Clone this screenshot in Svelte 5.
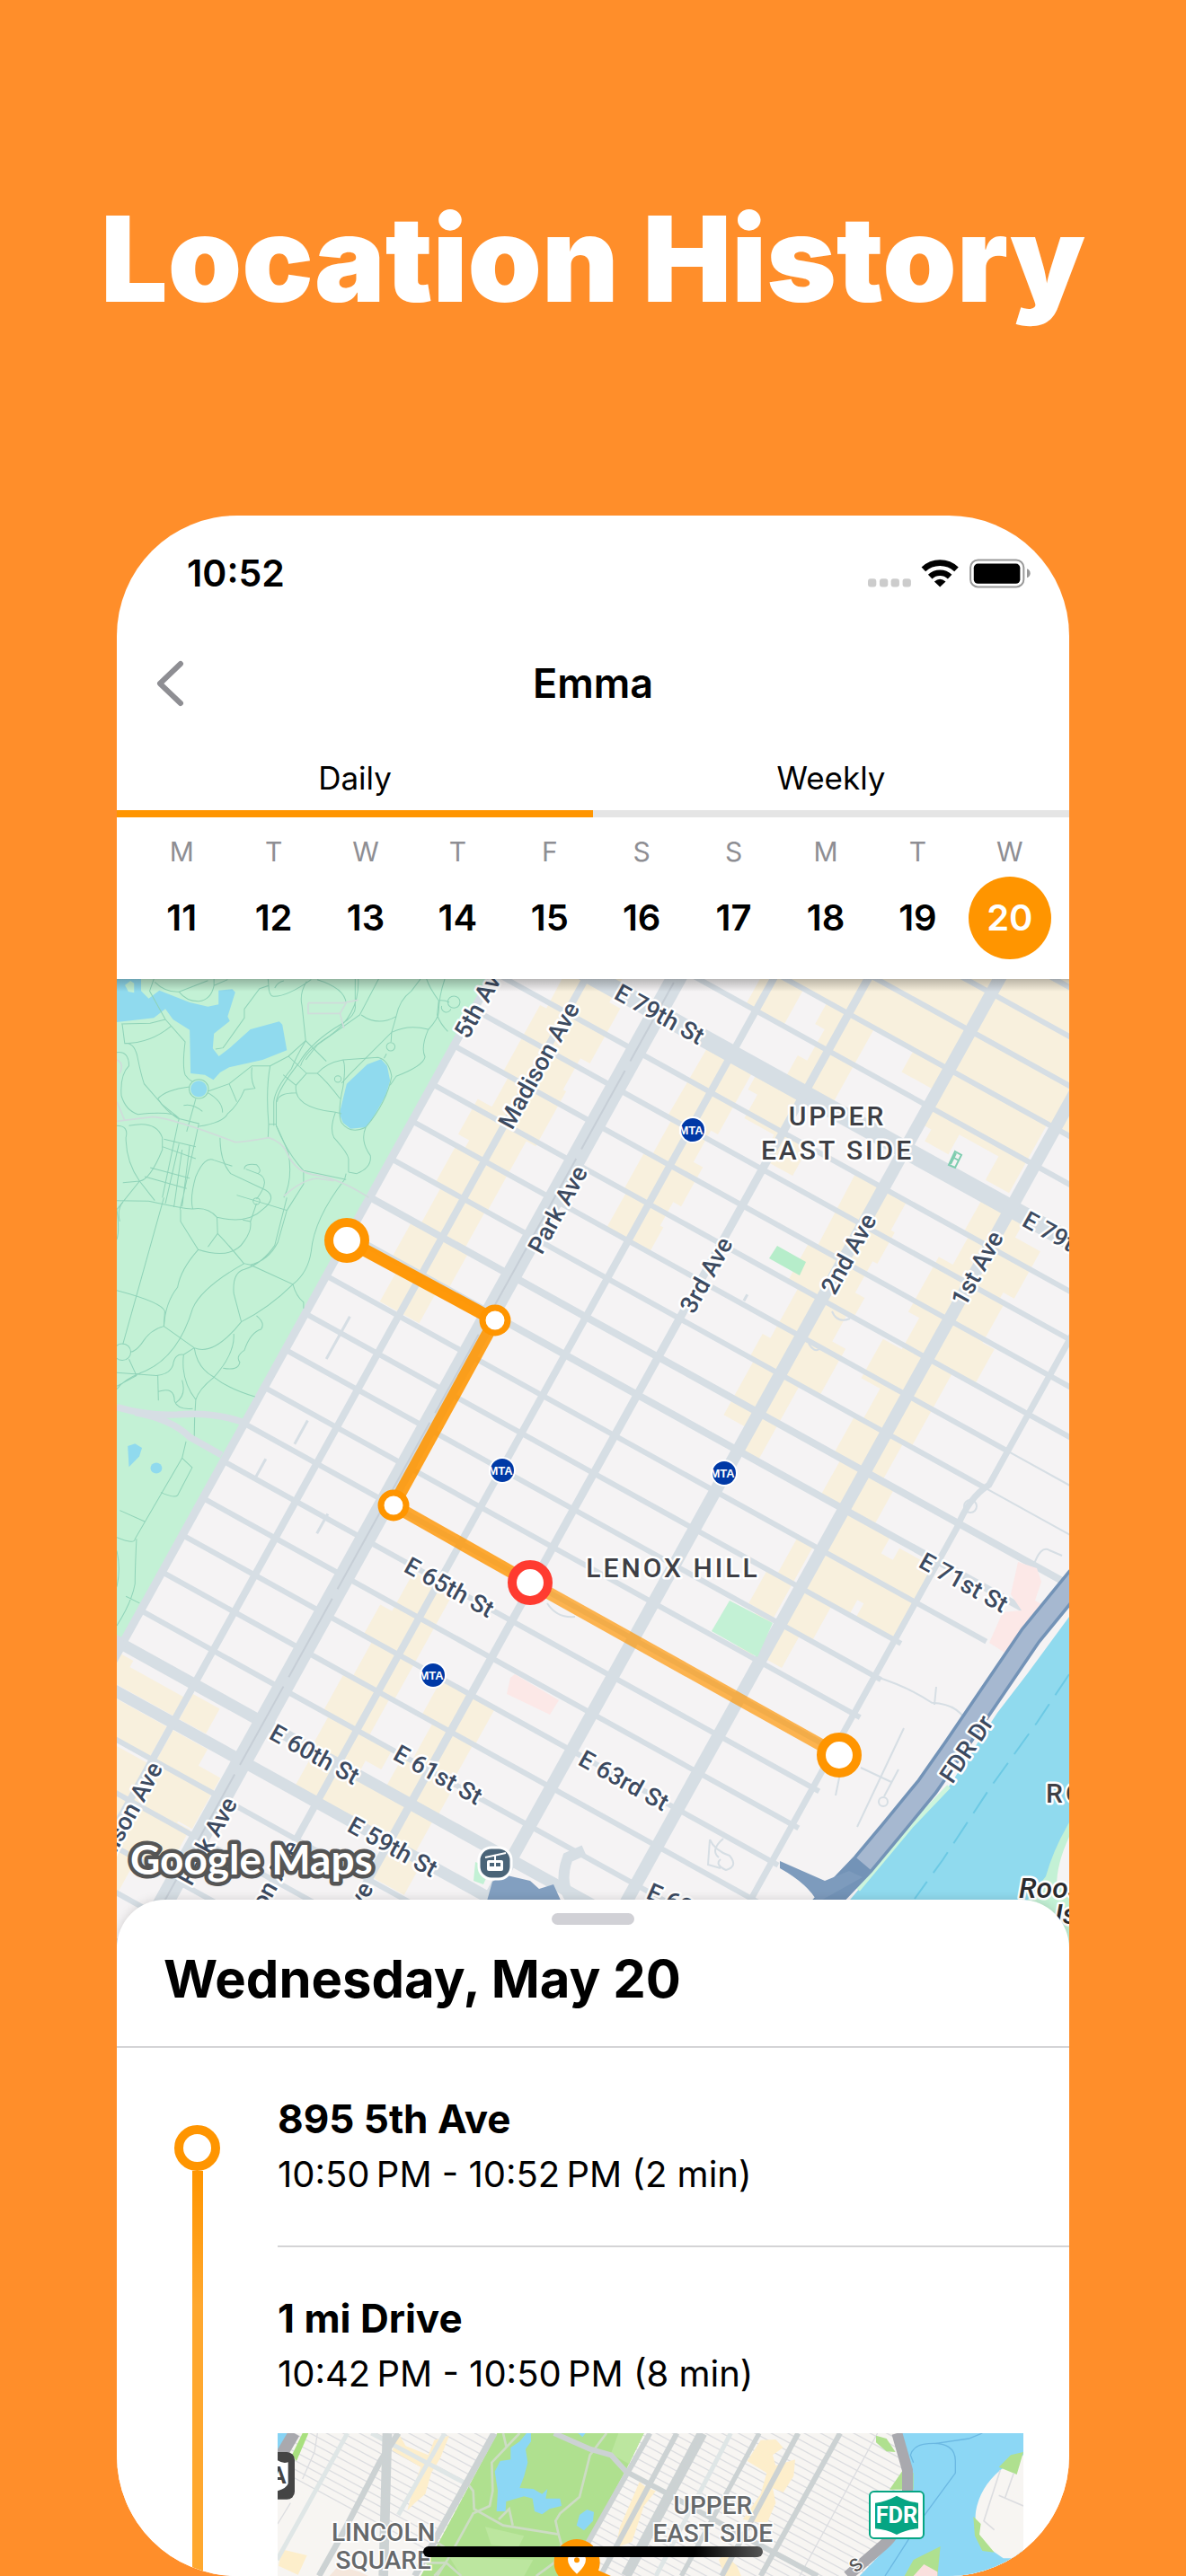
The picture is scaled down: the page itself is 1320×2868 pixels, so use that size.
<script lang="ts">
  interface Day {
    letter: string;
    date: number;
  }

  interface MapLabel {
    text: string;
    x: number;
    y: number;
    angle: number;
  }

  let activeTab = $state('daily');
  let selectedDate = $state(20);

  const tabs = [
    { id: 'daily', label: 'Daily' },
    { id: 'weekly', label: 'Weekly' }
  ];

  const days: Day[] = 'MTWTFSSMTW'.split('').map((letter, i) => ({ letter, date: 11 + i }));

  // Street grid, in a frame turned 29 degrees with its origin on 5th Ave
  const avenues = [
    { u: 0, width: 9, from: -700 },
    { u: 92, width: 8, from: -900 },
    { u: 180, width: 22, from: -900 },
    { u: 275, width: 8, from: -900 },
    { u: 367, width: 9, from: -900 },
    { u: 495, width: 14, from: -900 },
    { u: 630, width: 14, from: -900 }
  ];

  const streets = [
    -870, -821, -773, -725, -677, -628, -581, -526, -477, -430, -384, -335, -288, -240, -191,
    -143, -91, -43, 3, 51, 97, 145, 192, 239, 286, 335, 378, 427, 474, 526, 579, 623, 670
  ].map((v) => ({ v, width: streetWidth(v), from: v > 376 ? -400 : 0, to: streetEnd(v) }));

  function streetWidth(v: number): number {
    if (v === -526) return 20;
    if (v === 378 || v === 427) return 13;
    if (v === -191 || v === -143) return 8;
    return 6;
  }

  function streetEnd(v: number): number {
    if (v === -143) return 865;
    if (v === -91) return 840;
    if (v === -191 || v < -300) return 1100;
    return 758;
  }

  const labels: MapLabel[] = [
    { text: '5th Ave', x: 521, y: 1158, angle: -61 },
    { text: 'Madison Ave', x: 570, y: 1259, angle: -61 },
    { text: 'Park Ave', x: 603, y: 1398, angle: -61 },
    { text: '3rd Ave', x: 772, y: 1464, angle: -61 },
    { text: '2nd Ave', x: 929, y: 1443, angle: -61 },
    { text: '1st Ave', x: 1074, y: 1456, angle: -61 },
    { text: 'Madison Ave', x: 106, y: 2105, angle: -61 },
    { text: 'Park Ave', x: 213, y: 2101, angle: -61 },
    { text: 'Lexington Ave', x: 252, y: 2205, angle: -61 },
    { text: '3rd Ave', x: 372, y: 2182, angle: -61 },
    { text: 'E 79th St', x: 682, y: 1111, angle: 29 },
    { text: 'E 79th St', x: 1136, y: 1364, angle: 29 },
    { text: 'E 65th St', x: 448, y: 1749, angle: 29 },
    { text: 'E 60th St', x: 298, y: 1935, angle: 29 },
    { text: 'E 61st St', x: 436, y: 1958, angle: 29 },
    { text: 'E 59th St', x: 385, y: 2038, angle: 29 },
    { text: 'E 63rd St', x: 642, y: 1964, angle: 29 },
    { text: 'E 71st St', x: 1021, y: 1744, angle: 29 },
    { text: 'E 62nd St', x: 718, y: 2113, angle: 24 },
    { text: 'FDR Dr', x: 1060, y: 1987, angle: -56 }
  ];

  const stations = [
    { x: 771, y: 1258 },
    { x: 559, y: 1637 },
    { x: 482, y: 1865 },
    { x: 806, y: 1640 }
  ];

  const route = [
    { x: 386, y: 1381, kind: 'stop' },
    { x: 551, y: 1470, kind: 'turn' },
    { x: 438, y: 1676, kind: 'turn' },
    { x: 590, y: 1762, kind: 'current' },
    { x: 934, y: 1954, kind: 'stop' }
  ];

  // The trail fades towards its oldest point
  const segments = route.slice(1).map((end, i) => ({
    start: route[i],
    end,
    opacity: [0.96, 0.88, 0.8, 0.68][i]
  }));

  const entries = [
    { title: '895 5th Ave', time: '10:50\u202fPM - 10:52\u202fPM (2 min)', preview: false },
    { title: '1 mi Drive', time: '10:42\u202fPM - 10:50\u202fPM (8 min)', preview: true }
  ];
</script>

<main class="page">
  <h1 class="headline">Location History</h1>

  <section class="phone">
    <div class="status-bar">
      <span class="clock">10:52</span>
      <svg class="status-icons" viewBox="197 183 544 98" aria-hidden="true">
        {#each [197, 236, 274, 313] as x}
          <rect {x} y="249" width="28" height="28" rx="9" fill="#ccc" />
        {/each}
        <path d="M383 218 A80 80 0 0 1 493 218" fill="none" stroke="#000" stroke-width="20" />
        <path d="M405 243 A48 48 0 0 1 471 243" fill="none" stroke="#000" stroke-width="20" />
        <path d="M438 277 L419 259 Q438 242 457 259 Z" />
        <rect x="540" y="187" width="178" height="90" rx="25" fill="none" stroke="#999" stroke-width="6" />
        <rect x="551" y="199" width="155" height="67" rx="14" />
        <path d="M729 216 Q740 220 740 231 Q740 242 729 246 Z" fill="#999" />
      </svg>
    </div>

    <header class="nav">
      <button class="back" aria-label="Back">
        <svg viewBox="0 0 32 52" aria-hidden="true">
          <path d="M28 4 L5 26 L28 48" fill="none" stroke="#8e8e93" stroke-width="6" stroke-linecap="round" stroke-linejoin="round" />
        </svg>
      </button>
      <h2>Emma</h2>
    </header>

    <div class="tabs">
      {#each tabs as tab}
        <button class="tab" class:active={activeTab === tab.id} onclick={() => (activeTab = tab.id)}>
          {tab.label}
        </button>
      {/each}
    </div>

    <div class="days">
      {#each days as day}
        <button class="day" class:selected={selectedDate === day.date} onclick={() => (selectedDate = day.date)}>
          <span class="letter">{day.letter}</span>
          <span class="date">{day.date}</span>
        </button>
      {/each}
    </div>

    <div class="map">
      <svg viewBox="130 1090 1060 1080" role="img" aria-label="Route map">
        <rect x="130" y="1090" width="1060" height="1080" fill="#f5f3f4" />

        <g transform="translate(319 1500) rotate(29)">
          <rect x="-1000" y="-900" width="1000" height="1276" fill="#c3f1d5" />

          <!-- Shopping blocks along the avenues -->
          <g fill="#f8f0dd">
            <path d="M66 -640H160V-560H128V-510H142V-440H130V-400H134V-330H122V-240H120V-190H126V-143H116V-95H66V-143H54V-191H64V-240H56V-288H66V-300H52V-345H70V-384H62V-470H70Z" />
            <path d="M150 -640H178V-600H165V-560H150Z" />
            <path d="M248 -526H305V-440H296V-400H308V-350H298V-320H302V-288H247V-335H243V-384H252V-430H246Z" />
            <path d="M262 -900H700V-628H600V-581H500V-600H450V-628H400V-581H400V-526H340V-560H352V-600H340V-628H310V-581H262Z" />
            <path d="M495 -628H620V-540H590V-570H540V-545H510V-560H495Z" />
            <path d="M700 -900H900V-660H820V-700H760V-640H700Z" />
            <path d="M310 -520H367V-477H400V-440H360V-470H322V-500H310Z" />
            <path d="M460 -477H525V-440H530V-400H524V-360H536V-335H528V-300H545V-240H520V-191H520V-145H498V-170H462V-240H456V-270H466V-335H452V-384H462Z" />
            <path d="M597 -520H650V-500H682V-440H668V-430H675V-380H690V-335H662V-240H652V-191H668V-143H600V-191H590V-240H600V-280H576V-330H600V-370H586V-440H604V-480H597Z" />
            <path d="M600 -170H625V-143H600ZM637 -143H665V-95H637Z" />
            <path d="M636 -40V-143H690V-120H705V-135H752V-45H700V-62H692V-43H660V3H636Z" />
            <path d="M600 -91H620V51H600V0H588V-43H600ZM636 -43H670V3H655V45H636Z" />
            <path d="M245 150H295V286H290V335H275V427H245V390H240V335H232V286H242V240H230V200H245Z" />
            <path d="M330 240H398V286H396V335H400V378H398V427H340V378H334V335H345V286H330Z" />
            <path d="M275 335H320V360H300V378H367V427H275Z" />
            <path d="M367 427H410V470H367Z" />
            <path d="M-300 388H20V396H92V420H-300ZM96 388H130V420H96Z" />
            <path d="M-300 434H88V474H-300ZM96 434H140V455H168V520H96ZM-300 480H168V500H150V522H166V575H130V620H-300Z" />
            <path d="M-300 630H60V720H-300Z" />
          </g>

          <g class="roads">
            {#each streets as street}
              <path d="M{street.from} {street.v}H{street.to}" stroke-width={street.width} />
            {/each}
            {#each avenues as avenue}
              <path d="M{avenue.u} {avenue.from}V900" stroke-width={avenue.width} />
            {/each}
            <path d="M758 -900V-288L758 -245Q745 -222 750 -185V430" stroke-width="7" />
            <path d="M0 376V900M-400 378H0" stroke-width="10" />
            <path d="M758 -240H900M758 -288H1000M750 3q40 -8 70 -5q30 -15 50 5" stroke-width="2" />
            <path d="M45 -64V-10M60 60V90M40 120V145M130 140V165M420 -300V-292" stroke-width="3" />
          </g>
          <path d="M180 -900V900" stroke="#c6ced6" stroke-width="2" stroke-dasharray="100 12" fill="none" />
        </g>

        <!-- Central Park lakes and footpaths -->
        <g transform="translate(130 1080) scale(.338 .3333)">
          <g fill="#90daee">
            <path d="M0 30H80V70L105 95L140 68L240 108L300 122L335 115V68L380 64L390 74L365 155L372 170L320 212L316 262L336 288L372 260L440 198L535 172L545 182L560 268L480 300L370 325L340 342L318 367L290 350L243 345L240 200L185 165L160 130L122 160L0 174Z" />
            <circle cx="270" cy="397" r="27" />
            <path d="M825 315L870 298L890 320L900 370L885 420L840 500L820 525L770 530L745 510L733 480L745 430L757 380Z" />
            <path d="M36 1590L60 1582L83 1596L74 1625L40 1660Z" />
            <ellipse cx="130" cy="1664" rx="19" ry="18" />
          </g>
          <path d="M27 50L45 36L57 44V76L38 72Z" fill="#c3f1d5" />
          <g class="footpaths">
            <path d="M122 30L108 70L160 165L225 240Q215 320 225 350Q235 365 248 372M15 180L110 178L160 165M18 182L26 245Q60 240 70 300Q80 350 90 380L150 450L205 495M26 245Q110 245 178 188M125 40Q160 75 205 73L300 35M205 73Q230 105 270 104Q310 100 320 52V30M320 52L365 32" />
            <path d="M498 30L500 52L470 62L420 130V160L350 260L325 264M500 52Q500 85 515 88Q560 90 640 32M520 60Q530 40 550 36M625 38Q600 80 610 120L622 236L690 305M622 236L565 288L505 320H445L370 380L300 405M785 30V120Q790 150 740 180Q640 240 600 310Q530 400 525 440V520Q560 610 615 670L755 700M795 30Q800 150 700 220Q620 270 605 320" />
            <path d="M622 236Q590 290 575 330Q520 400 517 440V520M660 32Q750 60 755 110M862 30L800 150L660 250L622 300M1020 30Q1030 60 1060 102L1055 150Q1065 180 1090 205M1080 30Q1060 90 1060 140Q1060 160 1025 200Q1000 260 1015 290Q1010 320 920 355L900 385M1070 120a14 14 0 1 0 30 10M1060 102Q1080 100 1095 108M805 150Q860 190 920 155Q930 100 970 70L1000 30M920 155L905 208L765 350L740 378M905 208Q960 180 1025 198M905 208L903 240M888 280L880 295" />
            <circle cx="902" cy="256" r="14" /><circle cx="1110" cy="107" r="20" /><circle cx="270" cy="397" r="32" /><circle cx="728" cy="364" r="11" /><circle cx="460" cy="772" r="11" /><circle cx="18" cy="1276" r="28" />
            <path d="M745 300L860 292Q895 300 905 355Q890 440 820 525Q770 550 740 510Q725 480 745 390Q755 320 745 300Q690 310 660 345H625L590 385Q580 460 720 475L740 480M565 288L625 345M660 345Q690 370 735 430M590 385L548 350M590 410Q530 410 528 440M720 475Q700 530 715 560Q760 610 763 630V675M820 525Q800 570 835 620Q840 660 790 680L763 675" />
            <path d="M445 325Q440 370 455 395L420 400Q400 450 365 480Q350 510 270 522M370 380L395 440M505 320Q490 400 500 515L498 560M500 515H525M240 390Q160 400 135 430Q160 470 200 495M300 410Q350 440 348 476M260 430L230 540M220 452Q250 445 282 472M0 275Q40 270 40 320Q10 350 15 420Q30 470 70 482Q190 470 200 495L270 513L220 750L208 800M205 495L150 760M205 580L160 780M215 600L188 792M240 585L215 790" />
            <path d="M155 565L260 590M150 590L260 630M110 660L240 695M92 690L230 730M40 520Q130 500 150 560V600Q110 700 75 705L20 710M75 705Q30 640 30 560Q40 520 0 520M75 705L0 800Q10 870 0 900M0 770L105 772Q230 800 250 798Q300 790 330 826Q430 850 480 800Q530 760 490 735L375 680Q340 640 340 560M75 705L125 770M250 798Q240 760 260 690Q290 620 320 635L380 655M210 800V840L268 934Q380 970 420 905Q445 870 440 840L415 835M330 826L332 880L300 925M332 880Q370 920 418 980M268 934Q210 1000 200 1060Q160 1110 155 1190" />
            <path d="M155 760L20 1250M20 775Q0 800 10 840M420 665Q420 645 460 650Q480 670 465 680L425 665M465 680Q510 700 460 765M395 752L560 803L530 910Q500 970 440 985L580 1050Q630 1010 640 940Q650 830 750 700L755 680M418 980L440 985M460 780L440 840M550 760Q580 700 565 610Q540 550 525 520M560 803L615 715V670M560 760L520 920Q480 980 420 1000Q380 1010 385 1080L410 1175Q500 1130 580 1050Q590 1090 615 1110V1130" />
            <path d="M0 1070Q150 1110 158 1140L155 1190L255 1262Q320 1290 410 1175M155 1190Q110 1200 80 1250Q60 1275 45 1276M420 980Q280 1060 250 1130Q200 1300 80 1345Q20 1370 0 1400M255 1262Q265 1330 320 1360Q370 1400 455 1425M255 1262L220 1285Q190 1280 185 1320Q175 1350 130 1355L0 1345M220 1285Q210 1370 260 1435Q255 1500 255 1560M320 1360Q270 1400 260 1435M385 1215Q390 1280 320 1360M350 1330Q400 1340 405 1310Q390 1290 420 1270Q440 1210 475 1200Q490 1180 460 1155M135 1355L137 1438M137 1408Q190 1390 190 1440Q200 1470 250 1465M40 1300L65 1355L0 1390M215 1370Q230 1420 195 1445" />
            <path d="M228 1575L215 1630L248 1662L200 1755Q190 1765 145 1745M215 1630L60 1900Q60 1920 0 1895M10 1805L92 1842M65 1900Q60 2000 60 2050Q50 2110 0 2190M30 2092L75 2115M0 1940q14 60 0 120" />
          </g>
          <g class="bridle">
            <path d="M0 505L120 490Q200 500 390 575Q420 575 500 560Q545 575 560 610Q590 680 660 685Q740 700 830 760M0 440L25 500M550 755Q610 700 660 696L715 704M630 110H745L795 100M630 110V145H735L748 195M0 300Q25 310 10 345M755 110L735 145" />
          </g>
          <path d="M0 1460Q100 1490 200 1485Q320 1475 420 1512M60 1478Q180 1500 240 1560L345 1620" fill="none" stroke="#d6dee4" stroke-width="22" />
        </g>

        <g fill="#b6edca">
          <path d="M865 1387L897 1405L890 1420L856 1401Z" />
          <path d="M812 1782L860 1807L843 1845L792 1816Z" fill="#c3f1d5" />
          <path d="M529 2073L546 2080L538 2098L527 2094Z" fill="#c3f1d5" />
        </g>
        <path d="M1063 1282l7 4l-7 14l-7 -3zM1060 1288l7 4M1064 1284l-6 12" fill="none" stroke="#7fcdb0" stroke-width="2" />
        <g fill="#fce8e7">
          <path d="M1133 1739L1154 1746L1159 1761L1152 1782L1164 1789L1123 1843L1101 1829L1116 1795L1137 1793L1125 1775Z" />
          <path d="M573 1864L622 1893L612 1909L564 1886L568 1868Z" />
        </g>

        <!-- East River -->
        <path d="M1190 1800L1143 1864L1110 1907L1056 1989L1015 2032L947 2114L900 2170H1190Z" fill="#90daee" />
        <path d="M1190 2029Q1172 2060 1164 2089L1140 2120V2170H1190Z" fill="#c3f1d5" />
        <path d="M1190 2045Q1176 2075 1176 2100L1190 2103Z" fill="#f5f3f4" />
        <path d="M1056 1989L1015 2032L955 2104" fill="none" stroke="#cdf5dc" stroke-width="5" />
        <path d="M1190 1864L1154 1918L1103 1989L1049 2071L1018 2114" fill="none" stroke="#6cc9e4" stroke-width="2" stroke-dasharray="28 12" />
        <path d="M1200 1756L1147 1821L1096 1896L1062 1946L1032 1989L991 2039L961 2075L880 2160" fill="none" stroke="#7393b7" stroke-width="27" />
        <path d="M1200 1756L1147 1821L1096 1896L1062 1946L1032 1989L991 2039L961 2075" fill="none" stroke="#a6b8d0" stroke-width="20" />
        <path d="M868 2072L918 2094L945 2083L960 2090L910 2118Q900 2098 868 2080Z" fill="#7d9bbd" />
        <path d="M541 2120L548 2095L560 2087L590 2094L600 2103L616 2098L626 2120Z" fill="#829fc0" />
        <path d="M640 2120Q620 2100 632 2068L650 2060" fill="none" stroke="#d6dee4" stroke-width="12" />
        <g class="lanes">
          <path d="M1006 1924L954 2034M1000 1970L984 2000M958 1968L992 1984M938 1960L930 1999M790 2048Q795 2060 812 2066Q822 2078 808 2082Q795 2076 802 2070M790 2048L788 2076L802 2080M805 2047Q790 2060 800 2068" />
          <circle cx="983" cy="2006" r="5" />
          <circle cx="1080" cy="1677" r="7" />
          <path d="M926 1460Q932 1474 946 1468M900 1496Q906 1506 912 1502M609 1785Q620 1802 640 1800M1150 1744Q1158 1720 1168 1726L1182 1732M1042 1878L1040 1898" />
        </g>

        <g class="street-labels">
          {#each labels as label}
            <text transform="translate({label.x} {label.y}) rotate({label.angle})">{label.text}</text>
          {/each}
        </g>

        <g class="area-labels">
          <text x="932" y="1253">UPPER</text>
          <text x="932" y="1291">EAST SIDE</text>
          <text x="749" y="1756">LENOX HILL</text>
          <text x="1164" y="2007" class="from-start">ROOSEVELT</text>
        </g>
        <text class="island-label" x="1134" y="2113">Roosevelt</text>
        <text class="island-label" x="1174" y="2142">Island</text>

        {#each stations as station}
          <g transform="translate({station.x} {station.y})">
            <circle r="15" fill="#fff" />
            <circle r="13" fill="#0039a6" />
            <text class="station" x="-2" y="5">MTA</text>
          </g>
        {/each}

        <g transform="translate(551 2074)">
          <rect x="-18" y="-17" width="36" height="35" rx="14" fill="#4a6478" stroke="#fff" stroke-width="3" />
          <path d="M-11 -6L12 -11M0 -8V-2" stroke="#fff" stroke-width="2" fill="none" />
          <rect x="-9" y="-3" width="18" height="12" rx="2" fill="#fff" />
          <path d="M-6 0h5v4h-5zM1 0h5v4h-5z" fill="#4a6478" />
        </g>

        <text class="map-brand" x="145" y="2087">Google Maps</text>

        {#each segments as segment}
          <line
            x1={segment.start.x}
            y1={segment.start.y}
            x2={segment.end.x}
            y2={segment.end.y}
            stroke="#ff9500"
            stroke-width="14"
            stroke-opacity={segment.opacity}
          />
        {/each}
        {#each route as point}
          {#if point.kind === 'turn'}
            <circle cx={point.x} cy={point.y} r="14" fill="#fff" stroke="#ff9500" stroke-width="7" />
          {:else}
            <circle
              cx={point.x}
              cy={point.y}
              r="20"
              fill="#fff"
              stroke={point.kind === 'current' ? '#ff3b30' : '#ff9500'}
              stroke-width="10"
            />
          {/if}
        {/each}
      </svg>
    </div>

    <div class="sheet">
      <div class="grabber"></div>
      <h3>Wednesday, May 20</h3>
      <div class="timeline">
        <div class="rail">
          <span class="dot"></span>
          <span class="line"></span>
        </div>
        <ul class="entries">
          {#each entries as entry}
            <li class="entry">
              <h4>{entry.title}</h4>
              <p>{entry.time}</p>
              {#if entry.preview}
                <svg class="preview" viewBox="27 57 2490 477" role="img" aria-label="Drive preview">
                  <rect x="27" y="57" width="2490" height="477" fill="#f7f5f2" />
                  <g class="blocks">
                    {#each Array(60) as _, i}
                      <path d="M{-300 + i * 55} 0L{700 + i * 55} 540" />
                    {/each}
                    <path d="M160 57L150 120L110 210M70 290L27 360M2030 57L1770 534" />
                  </g>

                  <g fill="#fdeecb">
                    <path d="M430 57L455 100L530 130L550 80L600 65L570 140L540 190L520 260L485 290L460 315L480 240L505 170L410 115Z" />
                    <path d="M1235 220L1205 290L1170 370L1155 440L1210 420L1250 300L1290 250L1260 240Z" />
                    <path d="M1640 80L1690 78L1715 105L1680 130L1690 165L1755 145L1750 200L1715 255L1680 240L1690 290L1660 360L1580 345L1640 260L1660 190L1595 150Z" />
                    <path d="M1550 430L1500 480L1520 534H1575L1560 500L1540 480ZM40 445L125 465L95 530L30 500Z" />
                  </g>
                  <path d="M200 534L230 500L300 520L330 534Z" fill="#f5e7dc" />

                  <path d="M760 57H1250L1190 180L1060 420L1000 534H505Z" fill="#afe08f" />
                  <path d="M1165 57H1250L1200 160L1140 125ZM720 370L850 400L830 440L740 430ZM600 470L880 480L850 534H640Z" fill="#bce69f" />
                  <path d="M27 57H65L27 120Z" fill="#86d3f4" />
                  <path d="M110 57H130L90 150L75 130Z" fill="#a8e07e" />
                  <g fill="#8cd7f5">
                    <path d="M858 57H873V85L855 110L862 155L850 200L835 240L880 243L910 260L928 243L922 275L945 275L970 275L975 300L935 310L910 328L885 318L878 275L850 268L790 285L788 318H758L762 250L752 185L770 150L805 145V105L835 85Z" />
                    <path d="M1060 312L1083 320L1080 350L1050 382L1025 365L1035 330ZM1030 57H1055L1045 70Z" />
                  </g>
                  <g class="park-drives">
                    <path d="M835 57L742 155L745 250L735 300L680 325L600 470L560 534M780 57L790 100M665 230L680 250L683 310L780 365L965 395L955 350L970 325L1035 270L1070 130L1125 57M765 345L800 310L812 365M965 395L975 430L950 490L890 534M540 410L620 460M520 490H590L640 534M590 490L550 534" />
                  </g>

                  <g class="minor-avenues">
                    <path d="M260 57L120 310L25 480M585 57L430 330M340 57L655 225" />
                    <path d="M1540 57L1290 534" />
                  </g>
                  <g class="main-avenues">
                    <path d="M393 57L380 534" stroke-width="32" />
                    <path d="M430 57L370 150L240 400L165 534" stroke-width="20" />
                    <path d="M750 57L485 534" stroke-width="22" />
                    <path d="M1270 57L1000 534" stroke-width="18" />
                    <path d="M950 57L1070 110L1140 130L1190 185L1340 265L1580 400L1830 534" stroke-width="18" />
                    <path d="M1360 57L1105 534" stroke-width="18" />
                    <path d="M1445 57L1190 534" stroke-width="34" />
                    <path d="M1635 57L1375 534" stroke-width="16" />
                    <path d="M1765 57L1510 534" stroke-width="18" />
                    <path d="M1905 57L1640 534" stroke-width="18" />
                  </g>

                  <path d="M2110 57L2148 190V270L2080 420L1970 534H2517V57Z" fill="#8cd7f5" />
                  <path d="M2025 65L2060 75L2090 120L2060 118L2025 88ZM2115 180L2070 245H2150V190Z" fill="#afe08f" />
                  <path d="M2095 57L2130 180V260Q2110 380 2050 430L1930 534" fill="none" stroke="#a9a9ae" stroke-width="36" />
                  <path d="M82 57L10 180" fill="none" stroke="#a9a9ae" stroke-width="40" />
                  <path d="M2150 155L2140 130Q2150 95 2200 92Q2290 85 2290 150V190L2180 340L2055 534M2220 92L2335 75L2380 57" fill="none" stroke="#6bb8e2" stroke-width="4" />
                  <path d="M2517 130L2440 180Q2370 240 2358 320Q2350 390 2400 440L2450 475H2517Z" fill="#f7f5f2" />
                  <path d="M2517 120L2475 130L2435 170L2495 195ZM2350 335L2375 360L2370 395L2420 455L2380 450L2355 400ZM2120 534L2150 480L2240 435L2230 534Z" fill="#afe08f" />
                  <path d="M2150 534L2185 495L2230 520V534Z" fill="#fae0de" />
                  <path d="M2440 180L2385 350L2420 380M2435 265L2517 300M2485 190L2455 275" fill="none" stroke="#dcdde0" stroke-width="5" />

                  <g class="preview-labels">
                    <text x="380" y="416">LINCOLN</text>
                    <text x="380" y="511">SQUARE</text>
                    <text x="1480" y="326">UPPER</text>
                    <text x="1480" y="421">EAST SIDE</text>
                  </g>
                  <text class="river-label" transform="translate(1958 525) rotate(-42)">S</text>

                  <rect x="-50" y="120" width="134" height="158" rx="26" fill="#444" />
                  <path d="M27 148Q45 160 62 154V225Q58 240 27 250Z" fill="#fff" />
                  <text class="shield" x="30" y="226" fill="#444">A</text>

                  <rect x="2004" y="252" width="180" height="156" rx="14" fill="#fff" stroke="#06a583" stroke-width="6" />
                  <path d="M2022 290Q2060 285 2094 266Q2128 285 2166 290V376Q2128 378 2094 396Q2060 378 2022 376Z" fill="#06a583" />
                  <text class="shield" x="2094" y="356" fill="#fff">FDR</text>

                  <path d="M1026 411A77 77 0 0 1 1098 515L1140 534H965A77 77 0 0 1 1026 411Z" fill="#ff9500" />
                  <path d="M1026 527Q995 500 996 478A30 30 0 0 1 1056 478Q1057 500 1026 527Z" fill="#fff" />
                  <circle cx="1026" cy="481" r="9" fill="#ff9500" />
                </svg>
              {/if}
            </li>
          {/each}
        </ul>
      </div>
    </div>

    <div class="home-indicator"></div>
  </section>
</main>

<style>
  :global(body) {
    background: #ff8e2a;
  }

  .page {
    font-family: Inter, "Liberation Sans", sans-serif;
    color: #000;
    background: #ff8e2a;
  }

  h1,
  h2,
  h3,
  h4,
  p,
  ul {
    margin: 0;
    padding: 0;
  }

  button {
    padding: 0;
    border: 0;
    background: none;
    font: inherit;
    color: inherit;
    cursor: pointer;
  }

  .headline {
    padding: 208px 0 206px;
    font-size: 132px;
    font-weight: 900;
    line-height: 160px;
    text-align: center;
    color: #fff;
  }

  .phone {
    position: relative;
    margin: 0 130px;
    overflow: hidden;
    border-radius: 134px;
    background: #fff;
  }

  .status-bar {
    display: flex;
    align-items: center;
    justify-content: space-between;
    height: 128px;
    padding: 0 43px 0 78px;
  }

  .clock {
    font-size: 41px;
    font-weight: 600;
    line-height: 48px;
  }

  .status-icons {
    width: 181px;
    height: 33px;
  }

  .nav {
    display: grid;
    grid-template-columns: 120px 1fr 120px;
    align-items: center;
    height: 118px;
  }

  .back {
    display: flex;
    padding-left: 43px;
  }

  .back svg {
    width: 32px;
    height: 52px;
  }

  .nav h2 {
    font-size: 45px;
    font-weight: 600;
    line-height: 56px;
    text-align: center;
  }

  .tabs {
    display: grid;
    grid-template-columns: 1fr 1fr;
  }

  .tab {
    padding: 24px 0 14px;
    border-bottom: 8px solid #e5e5e5;
    font-size: 35px;
    line-height: 44px;
  }

  .tab.active {
    border-color: #ff9500;
  }

  .days {
    display: grid;
    grid-template-columns: repeat(10, 1fr);
    padding: 18px 15px 22px 21px;
  }

  .day {
    display: flex;
    flex-direction: column;
    align-items: center;
    gap: 8px;
  }

  .letter {
    font-size: 30px;
    line-height: 40px;
    color: #8e8e93;
  }

  .date {
    width: 92px;
    border-radius: 50%;
    font-size: 40px;
    font-weight: 600;
    line-height: 92px;
  }

  .selected .date {
    background: #ff9500;
    color: #fff;
  }

  .map {
    position: relative;
  }

  .map::before {
    content: "";
    position: absolute;
    inset: 0 0 auto;
    height: 14px;
    background: linear-gradient(rgba(0, 0, 0, 0.25), transparent);
  }

  .map svg {
    display: block;
    width: 100%;
  }

  .roads {
    fill: none;
    stroke: #d6dee4;
  }

  .footpaths {
    fill: none;
    stroke: #8fd3b8;
    stroke-width: 3;
  }

  .bridle {
    fill: none;
    stroke: #cfdcda;
    stroke-width: 5;
  }

  .lanes {
    fill: none;
    stroke: #d6dee4;
    stroke-width: 2;
  }

  .street-labels text,
  .area-labels text,
  .island-label {
    font-family: Roboto, "Liberation Sans", sans-serif;
    font-size: 27px;
    font-weight: 500;
    fill: #3c4a60;
    stroke: #fff;
    stroke-width: 5px;
    stroke-linejoin: round;
    paint-order: stroke;
  }

  .area-labels text {
    font-size: 30px;
    letter-spacing: 3px;
    text-anchor: middle;
    fill: #3e3f45;
  }

  .area-labels .from-start {
    text-anchor: start;
  }

  .island-label {
    font-size: 32px;
    font-style: italic;
    fill: #2b2b2e;
  }

  .station {
    font-family: "Liberation Sans", sans-serif;
    font-size: 13px;
    font-weight: 700;
    text-anchor: middle;
    fill: #fff;
  }

  .map-brand {
    font-family: Lato, sans-serif;
    font-size: 46px;
    font-weight: 700;
    fill: #fff;
    stroke: #555;
    stroke-width: 9px;
    stroke-linejoin: round;
    paint-order: stroke;
  }

  .sheet {
    position: relative;
    margin-top: -55px;
    border-radius: 54px 54px 0 0;
    background: #fff;
    box-shadow: 0 0 12px rgba(0, 0, 0, 0.15);
  }

  .grabber {
    width: 92px;
    height: 13px;
    margin: 0 auto;
    border-radius: 7px;
    background: #d1d1d6;
    transform: translateY(15px);
  }

  .sheet h3 {
    padding: 40px 52px;
    border-bottom: 2px solid #d4d4d6;
    font-size: 58px;
    font-weight: 700;
    line-height: 70px;
  }

  .timeline {
    display: flex;
  }

  .rail {
    display: flex;
    flex: 0 0 179px;
    flex-direction: column;
    align-items: center;
    padding-top: 86px;
  }

  .dot {
    box-sizing: border-box;
    width: 51px;
    height: 51px;
    border: 10px solid #ff9500;
    border-radius: 50%;
  }

  .line {
    flex: 1;
    width: 12px;
    background: linear-gradient(#ff9500, #ffa82f 150px);
  }

  .entries {
    flex: 1;
    min-width: 0;
    list-style: none;
  }

  .entry {
    padding: 48px 0;
  }

  .entry + .entry {
    padding-bottom: 0;
    border-top: 2px solid #d4d4d6;
  }

  .entry h4 {
    font-size: 44px;
    font-weight: 700;
    line-height: 62px;
  }

  .entry p {
    font-size: 40px;
    line-height: 62px;
  }

  .preview {
    display: block;
    width: calc(100% - 51px);
    margin-top: 35px;
  }

  .blocks,
  .park-drives,
  .minor-avenues,
  .main-avenues {
    fill: none;
  }

  .blocks {
    stroke: #dcdde0;
    stroke-width: 4;
  }

  .park-drives {
    stroke: #cddcc4;
    stroke-width: 8;
  }

  .minor-avenues {
    stroke: #dfe6e6;
    stroke-width: 15;
  }

  .main-avenues {
    stroke: #ccd2d3;
  }

  .preview-labels text {
    font-family: Roboto, "Liberation Sans", sans-serif;
    font-size: 84px;
    font-weight: 500;
    text-anchor: middle;
    fill: #66696b;
    stroke: #fff;
    stroke-width: 10px;
    paint-order: stroke;
  }

  .river-label {
    font-family: Roboto, sans-serif;
    font-size: 60px;
    font-weight: 500;
    fill: #555;
    stroke: #fff;
    stroke-width: 8px;
    paint-order: stroke;
  }

  .shield {
    font-family: Roboto, sans-serif;
    font-size: 76px;
    font-weight: 700;
    text-anchor: middle;
  }

  .home-indicator {
    position: absolute;
    bottom: 21px;
    left: 50%;
    width: 378px;
    height: 12px;
    margin-left: -189px;
    border-radius: 6px;
    background: linear-gradient(90deg, #000 80%, #555);
  }
</style>
